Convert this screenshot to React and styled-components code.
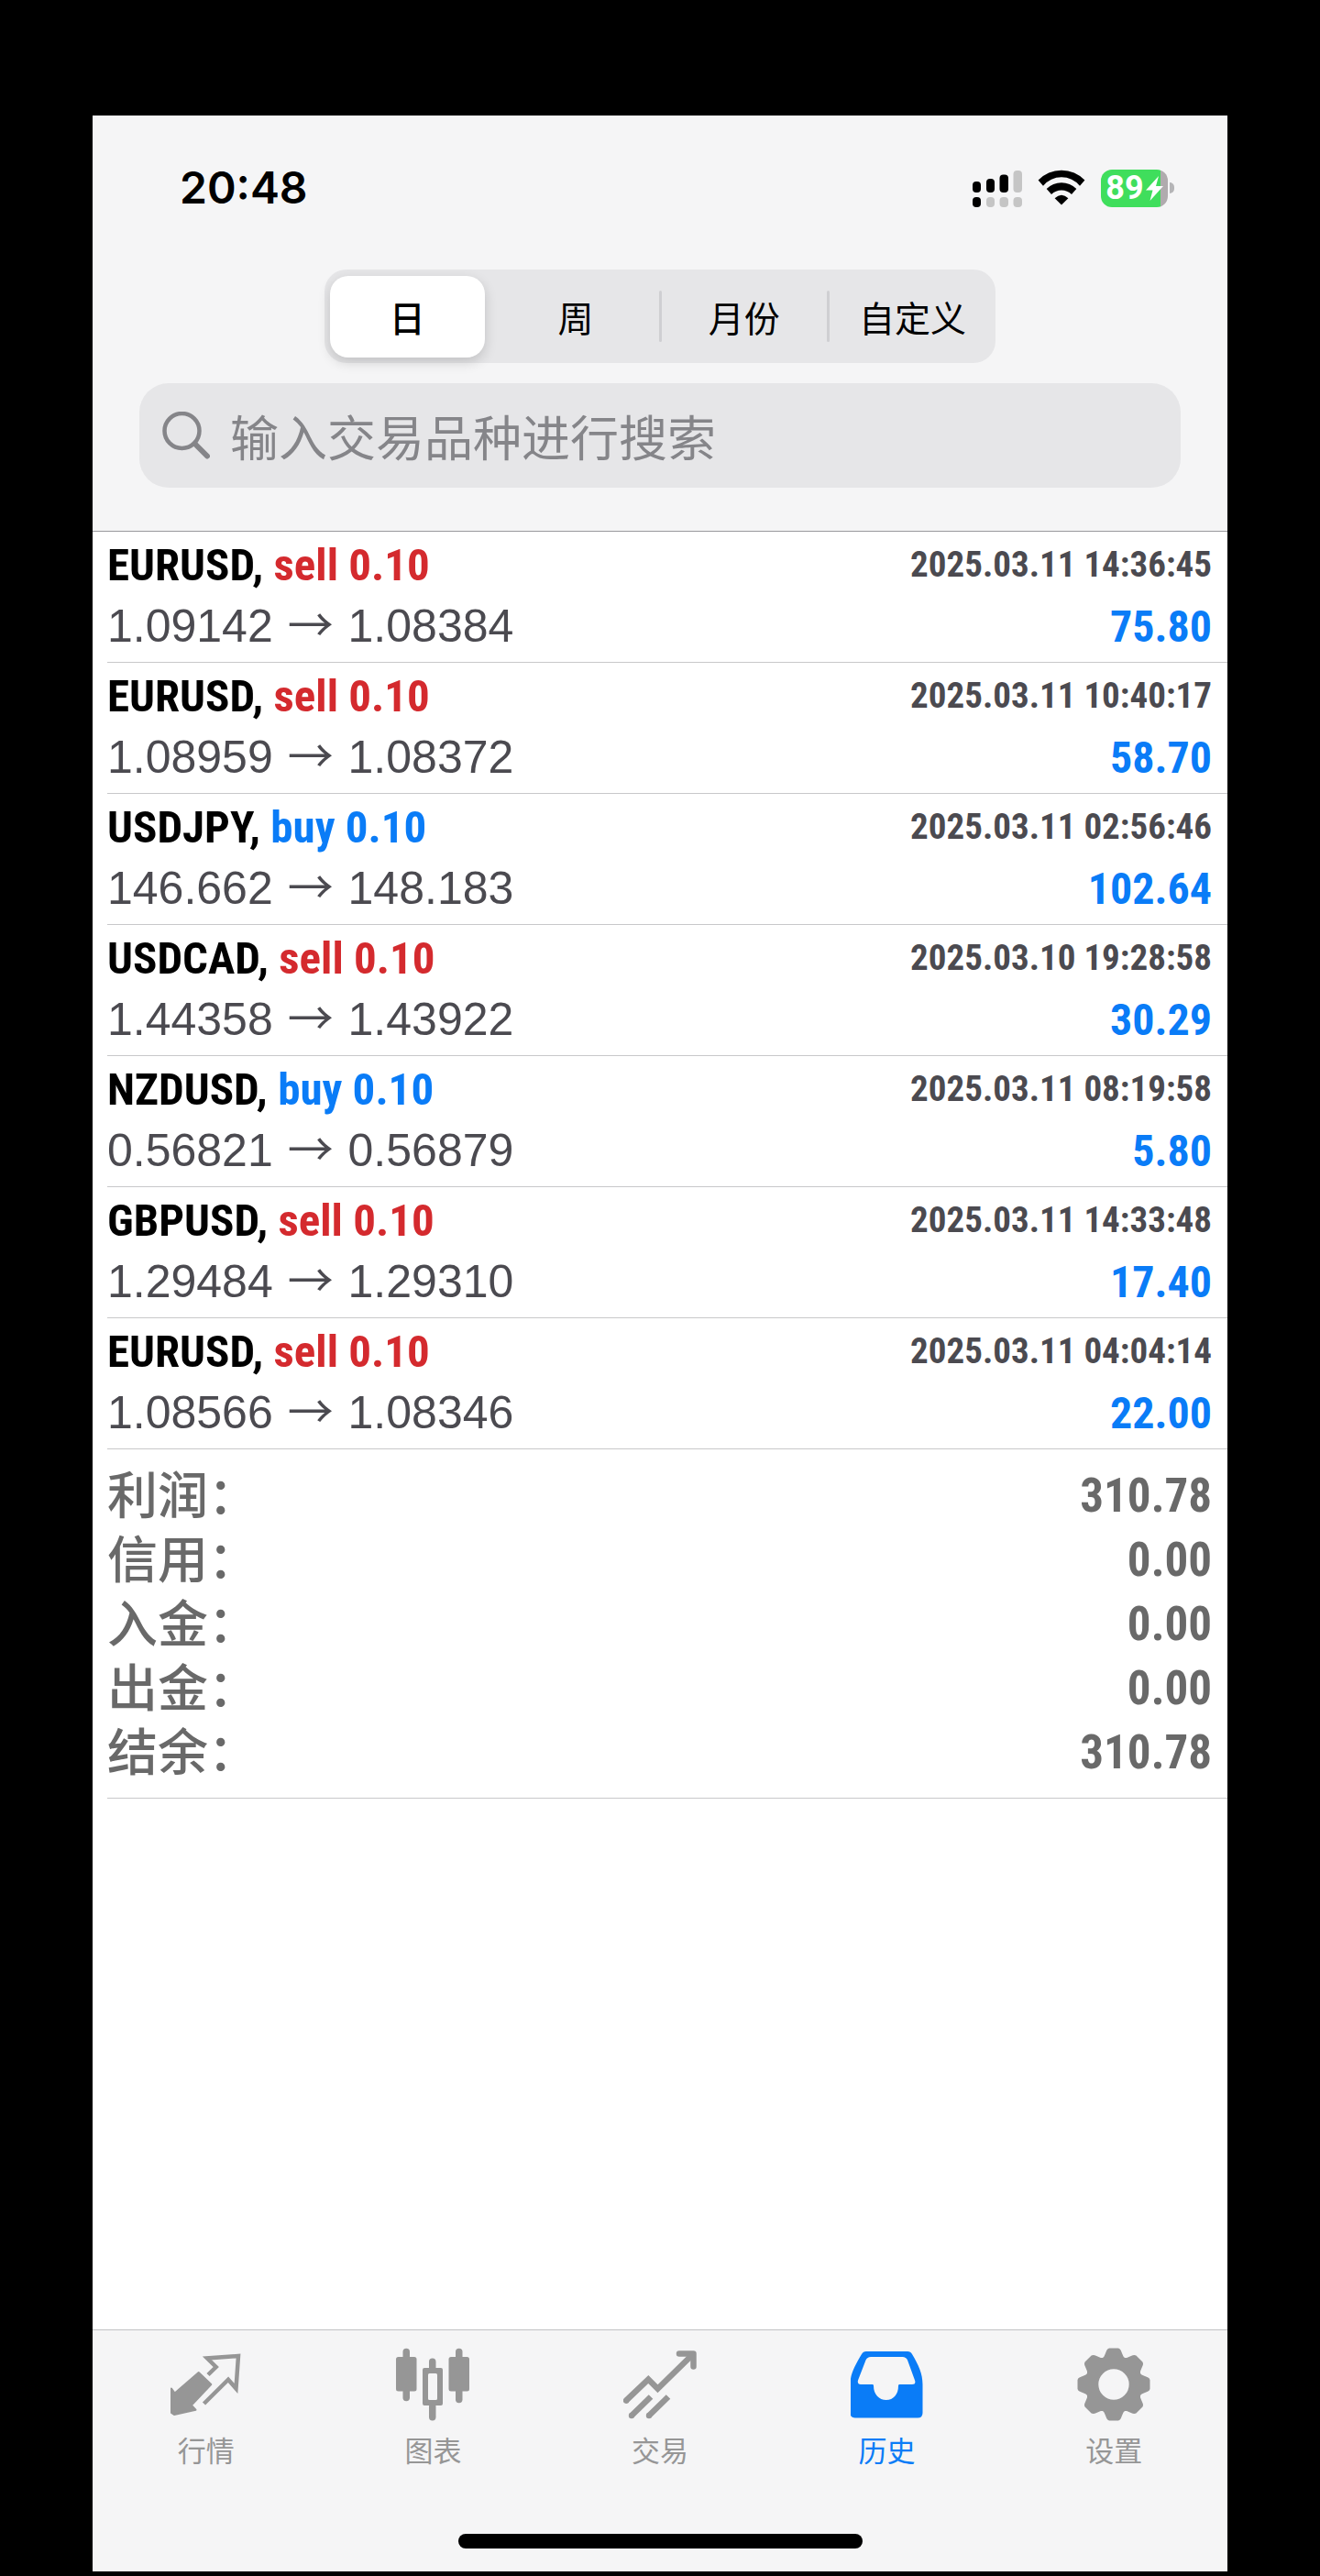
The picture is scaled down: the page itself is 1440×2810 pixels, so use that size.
import React, { useState } from "react";
import styled, { createGlobalStyle } from "styled-components";

const cjk = `"Noto Sans CJK SC", sans-serif`;
const base = `"Liberation Sans", ${cjk}`;
const narrow = `"Roboto Condensed", "Liberation Sans", ${cjk}`;
const blue = "#0a7cf7";
const red = "#d42a2e";

const GlobalStyle = createGlobalStyle`
  * { box-sizing: border-box; }
  body { margin: 0; background: #000; }
  button, input { font: inherit; color: inherit; }
`;

const Page = styled.div`
  display: flex;
  flex-direction: column;
  min-height: 100vh;
  padding: 126px 101px 5px;
  background: #000;
  font-family: ${base};
`;

const Screen = styled.main`
  flex: 1;
  display: flex;
  flex-direction: column;
  background: #fff;
`;

const Header = styled.header`
  display: flex;
  flex-direction: column;
  padding: 55px 51px 47px;
  background: #f5f5f6;
  border-bottom: 1px solid #99999c;
`;

const StatusBar = styled.div`
  display: flex;
  align-items: center;
  justify-content: space-between;
  height: 48px;
  padding: 0 7px 0 44px;
  margin-bottom: 65px;
`;

const Clock = styled.time`
  font: 600 48px/48px Inter, sans-serif;
`;

const StatusIcons = styled.div`
  display: flex;
  align-items: center;
  gap: 17px;
`;

const Battery = styled.div`
  display: flex;
  align-items: center;
  gap: 2px;
`;

const BatteryBody = styled.div`
  display: flex;
  align-items: center;
  justify-content: center;
  gap: 2px;
  width: 73px;
  height: 41px;
  border-radius: 12px;
  color: #fff;
  font: 700 36px/41px Roboto, sans-serif;
  background: linear-gradient(to right, #3fde5c 89%, #b0abae 89%);
`;

const BatteryTip = styled.div`
  width: 5px;
  height: 12px;
  border-radius: 0 6px 6px 0;
  background: #b5b5b7;
`;

const Segments = styled.div`
  display: flex;
  align-items: center;
  align-self: center;
  width: 100%;
  max-width: 732px;
  height: 102px;
  margin-bottom: 22px;
  border-radius: 24px;
  background: #e6e6e8;
`;

const Segment = styled.button`
  flex: 1 1 0;
  height: 89px;
  margin: 0 6px;
  padding: 0;
  border: 0;
  border-radius: 20px;
  font-family: ${cjk};
  font-size: 39px;
  font-weight: ${(p) => (p.$active ? 500 : 400)};
  line-height: 56px;
  white-space: nowrap;
  color: #000;
  background: ${(p) => (p.$active ? "#fff" : "transparent")};
  box-shadow: ${(p) => (p.$active ? "0 5px 14px rgba(0, 0, 0, 0.16)" : "none")};
`;

const SegmentRule = styled.span`
  width: 3px;
  height: 56px;
  border-radius: 2px;
  background: ${(p) => (p.$hidden ? "transparent" : "#cfcfd2")};
`;

const SearchBox = styled.label`
  display: flex;
  align-items: center;
  gap: 22px;
  height: 114px;
  padding: 0 25px;
  border-radius: 32px;
  color: #858589;
  background: #e6e6e8;
`;

const SearchInput = styled.input`
  flex: 1;
  min-width: 0;
  height: 80px;
  padding: 0;
  border: 0;
  outline: 0;
  font-family: ${cjk};
  font-size: 53px;
  background: transparent;
  &::placeholder { color: #858589; opacity: 1; }
`;

const DealList = styled.ul`
  margin: 0;
  padding: 0 0 0 16px;
  list-style: none;
`;

const Deal = styled.li`
  padding: 3px 17px 5px 0;
  border-bottom: 1px solid #c8c8ca;
`;

const Line = styled.div`
  display: flex;
  align-items: center;
  justify-content: space-between;
  height: 67px;
  line-height: 67px;
  white-space: nowrap;
`;

const Symbol = styled.strong`
  font-family: ${narrow};
  font-size: 49px;
  color: #000;
`;

const Side = styled.span`
  color: ${(p) => (p.$side === "buy" ? blue : red)};
`;

const Stamp = styled.time`
  font-family: ${narrow};
  font-size: 39px;
  font-weight: 700;
  color: #4b4a50;
`;

const Prices = styled.span`
  font-size: 50px;
  color: #4b4a50;
`;

const Arrow = styled.span`
  margin: 0 2px;
  font-family: ${cjk};
  line-height: 1;
`;

const Profit = styled.span`
  font-family: ${narrow};
  font-size: 48px;
  font-weight: 700;
  color: ${blue};
`;

const Summary = styled.dl`
  margin: 0 0 0 16px;
  padding: 16px 17px 14px 0;
  border-bottom: 1px solid #c8c8ca;
  color: #696969;
`;

const SummaryRow = styled.div`
  display: flex;
  justify-content: space-between;
  height: 70px;
  line-height: 70px;
`;

const Term = styled.dt`
  font-size: 55px;
  font-weight: 500;
`;

const Amount = styled.dd`
  margin: 0;
  font-family: ${narrow};
  font-size: 51px;
  font-weight: 700;
`;

const Footer = styled.footer`
  display: flex;
  flex-direction: column;
  align-items: center;
  margin-top: auto;
  padding: 19px 0 25px;
  border-top: 1px solid #c2c2c4;
  background: #f5f5f6;
`;

const Tabs = styled.nav`
  display: grid;
  grid-template-columns: repeat(5, 1fr);
  width: 100%;
  margin-bottom: 71px;
`;

const Tab = styled.button`
  display: flex;
  flex-direction: column;
  align-items: center;
  gap: 16px;
  padding: 0;
  border: 0;
  font-size: 31px;
  line-height: 36px;
  background: transparent;
  color: ${(p) => (p.$active ? blue : "#969696")};
`;

const HomeIndicator = styled.div`
  width: 36%;
  max-width: 441px;
  height: 16px;
  border-radius: 8px;
  background: #000;
`;

const SignalIcon = () => (
  <svg width="54" height="41" viewBox="0 0 54 41" aria-hidden="true">
    <rect x="0" y="13" width="9" height="12" rx="4" />
    <rect x="15" y="10" width="9" height="15" rx="4" />
    <rect x="29.5" y="5.5" width="9.5" height="19.5" rx="4" />
    <rect x="44.5" y="1" width="9.5" height="24" rx="4" fill="#c5c5c5" />
    <rect x="0" y="30" width="9" height="11" rx="4" />
    <rect x="15" y="30" width="9" height="11" rx="4" fill="#c5c5c5" />
    <rect x="29.5" y="30" width="9.5" height="11" rx="4" fill="#c5c5c5" />
    <rect x="44.5" y="30" width="9.5" height="11" rx="4" fill="#c5c5c5" />
  </svg>
);

const WifiIcon = () => (
  <svg width="52" height="41" viewBox="0 0 52 41" aria-hidden="true">
    <path d="M.6 11.6A35 35 0 0 1 51.4 11.6L46 17.7A26 26 0 0 0 6 17.7Z" />
    <path d="M9.7 21A23 23 0 0 1 42.3 21L37 27A15.5 15.5 0 0 0 15 27Z" />
    <path d="M18.6 31.2Q26 24.2 33.4 31.2L26 38.6Z" />
  </svg>
);

const BoltIcon = () => (
  <svg width="19" height="27" viewBox="0 0 19 27" fill="#fff" aria-hidden="true">
    <path d="M14 0L0 15.5H7.5L4.5 27L19 11H11Z" />
  </svg>
);

const SearchIcon = () => (
  <svg width="52" height="52" viewBox="0 0 52 52" fill="none" stroke="currentColor" strokeLinecap="round" aria-hidden="true">
    <circle cx="21.5" cy="21" r="19" strokeWidth="4.5" />
    <path d="M35.5 35L49 48.5" strokeWidth="6" />
  </svg>
);

const QuotesIcon = () => (
  <>
    <path
      d="M2 44.5L5.7 49.5L31.7 27L45.3 40L23.8 62.8L28.5 67.8L5 73L2 71Z"
      fill="currentColor" stroke="currentColor" strokeWidth="2" strokeLinejoin="round"
    />
    <path d="M42 29.5L50.7 21L41 11.5L75 9L72.5 44.5L64 34.7L37.5 61" fill="none" stroke="currentColor" strokeWidth="4.5" />
  </>
);

const ChartIcon = () => (
  <g fill="currentColor">
    <rect x="0" y="10" width="22.5" height="37.5" rx="2.5" />
    <rect x="7.5" y=".7" width="7.5" height="57.5" rx="3.7" />
    <rect x="57.5" y="10" width="22.5" height="37.5" rx="2.5" />
    <rect x="65" y=".7" width="7.5" height="59.5" rx="3.7" />
    <rect x="36" y="11.5" width="7.5" height="15" rx="3.7" />
    <rect x="36" y="60" width="7.5" height="19.5" rx="3.7" />
    <path fillRule="evenodd" d="M31 22H49Q51 22 51 24V61Q51 63 49 63H31Q29 63 29 61V24Q29 22 31 22ZM36.5 28Q35 28 35 29.5V55.5Q35 57 36.5 57H43.5Q45 57 45 55.5V29.5Q45 28 43.5 28Z" />
  </g>
);

const TradeIcon = () => (
  <g fill="none" stroke="currentColor" strokeWidth="6.5">
    <path d="M3 57.7L27.3 34.5L37.5 44.7L76 7" />
    <path d="M61 6.5H76.5V20.5" strokeLinecap="round" strokeLinejoin="round" />
    <path d="M9 74L30 53.5M28 74L49 53.5" />
    <g fill="currentColor" stroke="none">
      <circle cx="3" cy="57.7" r="3.2" />
      <circle cx="9" cy="74" r="3.2" />
      <circle cx="28" cy="74" r="3.2" />
    </g>
  </g>
);

const HistoryIcon = () => (
  <path
    fill="currentColor" fillRule="evenodd"
    d="M17 4H62Q65.5 4 67 7C74 19 78.5 28 78.5 40V71Q78.5 76.5 73 76.5H5Q-.5 76.5 -.5 71V40C-.5 28 5 19 12 7Q13.5 4 17 4ZM22 10Q18 10 16.5 13.5L8 35.5Q7 40 11 40H24Q25 40 25 41.5C25 51 31 57 38.8 57S52 51 52 41.5Q52 40 53 40H67Q71.5 40 70 35.5L62 13.5Q60.5 10 56.5 10Z"
  />
);

const gearTooth = [
  [-12, -29], [-10.5, -30.5], [-9, -34], [-7.8, -37], [-6.8, -38.6], [-5, -39.5],
  [5, -39.5], [6.8, -38.6], [7.8, -37], [9, -34], [10.5, -30.5], [12, -29],
];

const gearPath = Array.from({ length: 8 }, (_, i) => {
  const a = (i * Math.PI) / 4;
  return gearTooth.map(([x, y]) =>
    `${(40 + x * Math.cos(a) - y * Math.sin(a)).toFixed(2)} ${(40 + x * Math.sin(a) + y * Math.cos(a)).toFixed(2)}`
  ).join("L");
}).join("L");

const SettingsIcon = () => (
  <path
    fill="currentColor" fillRule="evenodd"
    d={`M${gearPath}ZM23.3 40A16.7 16.7 0 1 0 56.7 40A16.7 16.7 0 1 0 23.3 40Z`}
  />
);

const periods = ["日", "周", "月份", "自定义"];

const deals = [
  ["EURUSD", "sell", "1.09142", "1.08384", "2025.03.11 14:36:45", "75.80"],
  ["EURUSD", "sell", "1.08959", "1.08372", "2025.03.11 10:40:17", "58.70"],
  ["USDJPY", "buy", "146.662", "148.183", "2025.03.11 02:56:46", "102.64"],
  ["USDCAD", "sell", "1.44358", "1.43922", "2025.03.10 19:28:58", "30.29"],
  ["NZDUSD", "buy", "0.56821", "0.56879", "2025.03.11 08:19:58", "5.80"],
  ["GBPUSD", "sell", "1.29484", "1.29310", "2025.03.11 14:33:48", "17.40"],
  ["EURUSD", "sell", "1.08566", "1.08346", "2025.03.11 04:04:14", "22.00"],
];

const totals = [
  ["利润：", "310.78"],
  ["信用：", "0.00"],
  ["入金：", "0.00"],
  ["出金：", "0.00"],
  ["结余：", "310.78"],
];

const tabs = [
  ["行情", QuotesIcon],
  ["图表", ChartIcon],
  ["交易", TradeIcon],
  ["历史", HistoryIcon],
  ["设置", SettingsIcon],
];

export default function App() {
  const [period, setPeriod] = useState(0);
  const [tab, setTab] = useState("历史");

  return (
    <Page lang="zh-CN">
      <GlobalStyle />
      <Screen>
        <Header>
          <StatusBar>
            <Clock>20:48</Clock>
            <StatusIcons>
              <SignalIcon />
              <WifiIcon />
              <Battery>
                <BatteryBody>89<BoltIcon /></BatteryBody>
                <BatteryTip />
              </Battery>
            </StatusIcons>
          </StatusBar>
          <Segments>
            {periods.map((name, i) => (
              <React.Fragment key={name}>
                {i > 0 && <SegmentRule $hidden={period === i || period === i - 1} />}
                <Segment type="button" $active={i === period} aria-pressed={i === period} onClick={() => setPeriod(i)}>
                  {name}
                </Segment>
              </React.Fragment>
            ))}
          </Segments>
          <SearchBox>
            <SearchIcon />
            <SearchInput type="text" placeholder="输入交易品种进行搜索" />
          </SearchBox>
        </Header>

        <DealList>
          {deals.map(([symbol, side, open, close, time, profit]) => (
            <Deal key={symbol + time}>
              <Line>
                <Symbol>{symbol}, <Side $side={side}>{side} 0.10</Side></Symbol>
                <Stamp>{time}</Stamp>
              </Line>
              <Line>
                <Prices>{open} <Arrow>→</Arrow> {close}</Prices>
                <Profit>{profit}</Profit>
              </Line>
            </Deal>
          ))}
        </DealList>

        <Summary>
          {totals.map(([term, amount]) => (
            <SummaryRow key={term}>
              <Term>{term}</Term>
              <Amount>{amount}</Amount>
            </SummaryRow>
          ))}
        </Summary>

        <Footer>
          <Tabs>
            {tabs.map(([name, Icon]) => (
              <Tab key={name} type="button" $active={name === tab} onClick={() => setTab(name)}>
                <svg width="80" height="80" viewBox="0 0 80 80" aria-hidden="true"><Icon /></svg>
                {name}
              </Tab>
            ))}
          </Tabs>
          <HomeIndicator />
        </Footer>
      </Screen>
    </Page>
  );
}
